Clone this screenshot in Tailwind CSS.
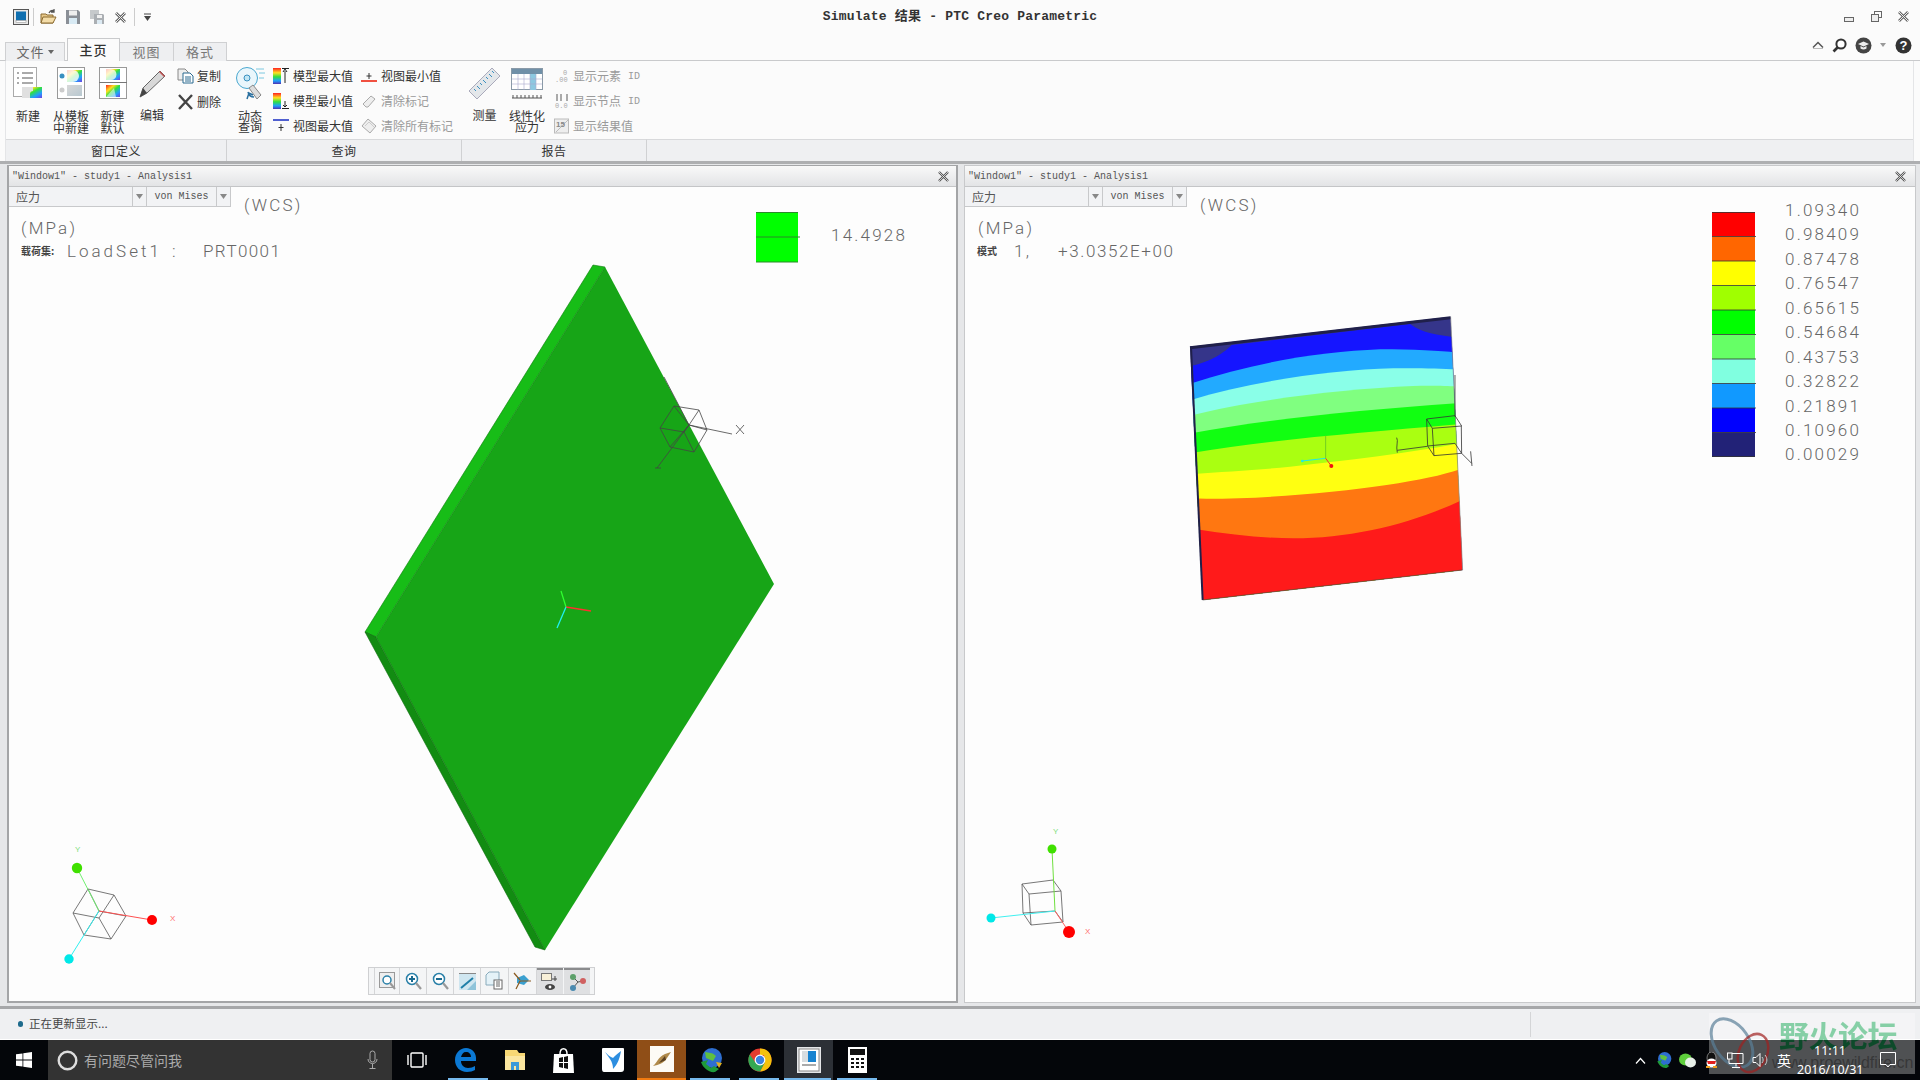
<!doctype html>
<html>
  <head>
    <meta charset="UTF-8" />
    <title>Simulate 结果 - PTC Creo Parametric</title>
    <script src="https://cdn.jsdelivr.net/npm/@tailwindcss/browser@4"></script>
  </head>
  <body class="w-[1920px] h-[1080px] overflow-hidden relative flex flex-col bg-[#fbfbfb] text-[#333] font-['Noto_Sans_CJK_SC',sans-serif] text-[12px]">
    <!-- shared gradients -->
    <svg class="absolute w-0 h-0">
      <defs>
        <linearGradient id="rb" x1="0" y1="0" x2="1" y2="1">
          <stop offset="0" stop-color="#ff2020" /><stop offset=".3" stop-color="#ffe020" /><stop offset=".5" stop-color="#30e040" /><stop offset=".75" stop-color="#20a0ff" /><stop offset="1" stop-color="#7040e0" />
        </linearGradient>
        <linearGradient id="rv" x1="0" y1="0" x2="0" y2="1">
          <stop offset="0" stop-color="#ff2020" /><stop offset=".3" stop-color="#ffe020" /><stop offset=".55" stop-color="#30e040" /><stop offset=".8" stop-color="#20a0ff" /><stop offset="1" stop-color="#5030b0" />
        </linearGradient>
        <linearGradient id="rg" x1="0" y1="0" x2="1" y2="1">
          <stop offset="0" stop-color="#d8d8d8" /><stop offset="1" stop-color="#b8c8d0" />
        </linearGradient>
      </defs>
    </svg>

    <!-- title bar -->
    <header class="h-[38px] shrink-0 grid grid-cols-[1fr_auto_1fr] items-start">
      <div class="flex items-center pl-[13px] pt-[8px] h-[26px]">
        <svg class="w-[16px] h-[16px]" viewBox="0 0 16 16"><rect x=".5" y=".5" width="15" height="15" fill="#e8e8e8" stroke="#555" /><rect x="3" y="2.500" width="10" height="9" fill="#0f6fb0" /><rect x="3" y="11.500" width="10" height="2" fill="#fff" stroke="#888" stroke-width=".5" /></svg>
        <span class="w-px h-[18px] bg-[#ccc] mx-[4px]"></span>
        <svg class="ml-[2px] w-[17px] h-[16px]" viewBox="0 0 17 16"><path d="M1 5h5l1 1h6v8H1z" fill="#e8c98a" stroke="#8a6a30" /><path d="M3 8h13l-3 6H1z" fill="#f3dca8" stroke="#8a6a30" /><path d="M9 4c1-2 3-3 5-2M14 0v3h-3" fill="none" stroke="#555" stroke-width="1.300" /></svg>
        <svg class="ml-[8px] w-[16px] h-[16px]" viewBox="0 0 16 16"><path d="M1 1h12l2 2v12H1z" fill="#8a8f96" /><rect x="4" y="1.500" width="8" height="5" fill="#eee" /><rect x="4" y="9" width="8" height="6" fill="#d8eaf4" /></svg>
        <svg class="ml-[8px] w-[16px] h-[16px] opacity-70" viewBox="0 0 16 16"><path d="M1 1h9v9H1z" fill="#b0b4b8" /><path d="M5 5h9l1 1v9H5z" fill="#8a8f96" /><rect x="8" y="6" width="5" height="3" fill="#eee" /><rect x="8" y="11" width="5" height="4" fill="#cfe4f0" /></svg>
        <svg class="ml-[10px] w-[11px] h-[11px]" viewBox="0 0 11 11"><path d="M1 1l9 9M10 1l-9 9" stroke="#666" stroke-width="2.800" /><path d="M1 1l9 9M10 1l-9 9" stroke="#eee" stroke-width="1" /></svg>
        <span class="w-px h-[18px] bg-[#ccc] ml-[8px] mr-[8px]"></span>
        <svg class="w-[9px] h-[9px]" viewBox="0 0 9 9"><path d="M1 1h7" stroke="#444" /><path d="M1 3h7L4.500 8z" fill="#444" /></svg>
      </div>
      <div class="pt-[8px] font-['Liberation_Mono','Noto_Sans_CJK_SC',monospace] font-bold text-[13px] leading-[18px] tracking-[.2px] text-[#333]">Simulate 结果 - PTC Creo Parametric</div>
      <div class="flex justify-end items-center pt-[10px] pr-[11px] gap-[16px]">
        <svg class="w-[10px] h-[5px] mt-[7px]" viewBox="0 0 10 5"><rect x=".5" y=".5" width="9" height="4" fill="#eee" stroke="#666" /></svg>
        <svg class="w-[11px] h-[11px] ml-[1px]" viewBox="0 0 11 11"><rect x="3.500" y=".5" width="7" height="6" fill="none" stroke="#666" /><rect x=".5" y="3.500" width="7" height="7" fill="#eee" stroke="#666" /></svg>
        <svg class="w-[11px] h-[11px]" viewBox="0 0 11 11"><path d="M1 1l9 9M10 1l-9 9" stroke="#666" stroke-width="2.600" /><path d="M1 1l9 9M10 1l-9 9" stroke="#eee" stroke-width="1" /></svg>
      </div>
    </header>

    <!-- tabs -->
    <nav class="h-[23px] shrink-0 flex items-end pl-[5px] border-b border-[#c9cacc] relative">
      <div class="w-[60px] h-[19px] -mb-px flex items-center justify-center gap-[3px] bg-[#eeeff1] border border-b-0 border-[#cfd0d2] text-[#666] text-[13px] tracking-[1px]">文件<svg class="w-[6px] h-[4px]" viewBox="0 0 6 4"><path d="M0 0h6L3 4z" fill="#666" /></svg></div>
      <div class="ml-[2px] w-[53px] h-[23px] -mb-px flex items-center justify-center bg-[#fbfbfb] border border-b-0 border-[#c9cacc] text-[13px] tracking-[1px] relative z-10 font-medium">主页</div>
      <div class="w-[54px] h-[19px] -mb-px flex items-center justify-center bg-[#eeeff1] border border-l-0 border-b-0 border-[#cfd0d2] text-[#777] text-[13px] tracking-[1px]">视图</div>
      <div class="w-[53px] h-[19px] -mb-px flex items-center justify-center bg-[#eeeff1] border border-l-0 border-b-0 border-[#cfd0d2] text-[#777] text-[13px] tracking-[1px]">格式</div>
      <div class="ml-auto mr-[8px] flex items-center gap-[8px] h-[20px] mb-[5px]">
        <svg class="w-[12px] h-[8px]" viewBox="0 0 12 8"><path d="M1 6.500l5-5 5 5" fill="none" stroke="#555" stroke-width="1.500" /><path d="M1 7.500h10" stroke="#bbb" /></svg>
        <svg class="w-[15px] h-[15px]" viewBox="0 0 15 15"><circle cx="9" cy="6" r="4.600" fill="#fff" stroke="#333" stroke-width="2" /><path d="M5.500 9.500L1.500 13.500" stroke="#333" stroke-width="2.600" /></svg>
        <svg class="w-[17px] h-[17px]" viewBox="0 0 17 17"><circle cx="8.500" cy="8.500" r="8" fill="#444" /><path d="M3 7l5.500-2.500L14 7l-5.500 2.500z" fill="#eee" /><path d="M5.500 9v2.500c2 1.200 4 1.200 6 0V9l-3 1.400z" fill="#eee" /></svg>
        <svg class="w-[6px] h-[4px]" viewBox="0 0 6 4"><path d="M0 0h6L3 4z" fill="#999" /></svg>
        <svg class="w-[17px] h-[17px] ml-[1px]" viewBox="0 0 17 17"><circle cx="8.500" cy="8.500" r="8" fill="#333" /><text x="8.500" y="13" text-anchor="middle" fill="#fff" class="text-[13px] font-bold font-['Liberation_Sans']">?</text></svg>
      </div>
    </nav>

    <!-- ribbon -->
    <section class="h-[100px] shrink-0 flex pl-[5px] pr-[6px] bg-[#fbfbfb]">
      <div class="w-[222px] flex flex-col border-l border-[#e4e5e7]">
        <div class="h-[78px] flex">
          <div class="w-[44px] flex flex-col items-center pt-[6px]">
            <svg class="w-[30px] h-[32px]" viewBox="0 0 30 32"><rect x=".5" y=".5" width="23" height="29" fill="#fff" stroke="#aaa" /><path d="M4 6h2M9 6h11M4 11h2M9 11h11M4 16h2M9 16h11" stroke="#555" /><rect x="9" y="20" width="20" height="11" fill="url(#rb)" /><path d="M9 31h8v-4c0-2 1-3 3-3v-4H9z" fill="#e0e0e0" /></svg>
            <span class="mt-[11px] leading-[12px]">新建</span>
          </div>
          <div class="w-[42px] flex flex-col items-center pt-[6px]">
            <svg class="w-[28px] h-[32px]" viewBox="0 0 28 32"><rect x=".5" y=".5" width="27" height="31" fill="#fff" stroke="#999" /><rect x="10" y="3" width="15" height="12" fill="url(#rb)" /><path d="M10 3h6a5 5 0 0 1 0 12h-6z" fill="#fff" opacity=".8" /><circle cx="5" cy="9" r="2.500" fill="#3a90c0" /><rect x="10" y="18" width="15" height="11" fill="url(#rg)" /><circle cx="5" cy="23" r="2.500" fill="#ccc" /></svg>
            <span class="mt-[11px] leading-[12px] text-center">从模板<br />中新建</span>
          </div>
          <div class="w-[41px] flex flex-col items-center pt-[6px]">
            <svg class="w-[28px] h-[32px]" viewBox="0 0 28 32"><rect x=".5" y=".5" width="27" height="31" fill="#fff" stroke="#999" /><path d="M0 15.500h28" stroke="#777" /><rect x="7" y="2" width="14" height="11" fill="url(#rb)" /><path d="M7 2h5a4 4 0 0 1 0 11H7z" fill="#fff" opacity=".75" /><rect x="7" y="18" width="14" height="12" fill="url(#rb)" /><path d="M7 30l8-9 2 9z" fill="#fff" opacity=".55" /></svg>
            <span class="mt-[11px] leading-[12px] text-center">新建<br />默认</span>
          </div>
          <div class="w-[38px] flex flex-col items-center pt-[9px]">
            <svg class="w-[27px] h-[28px]" viewBox="0 0 27 28"><path d="M1 27l3-9L21 1l5 5L8 23z" fill="#d8d8d8" stroke="#666" /><path d="M1 27l3-9 4 5z" fill="#444" /><path d="M20 2l5 5 1-1-5-5z" fill="#c05050" /></svg>
            <span class="mt-[11px] leading-[12px]">编辑</span>
          </div>
          <div class="flex-1 flex flex-col pl-[6px] pt-[7px] gap-[10px]">
            <div class="flex items-center gap-[3px] h-[16px]"><svg class="w-[17px] h-[16px]" viewBox="0 0 17 16"><path d="M1 1h7l3 3v8H1z" fill="#eee" stroke="#888" /><path d="M6 5h7l3 3v7H6z" fill="#fff" stroke="#2a6a90" /><path d="M8 9h6M8 11h6M8 13h6" stroke="#2a6a90" /></svg>复制</div>
            <div class="flex items-center gap-[3px] h-[16px]"><svg class="w-[17px] h-[16px]" viewBox="0 0 17 16"><path d="M2 1l13 14M15 1L2 15" stroke="#444" stroke-width="2.400" /></svg>删除</div>
          </div>
        </div>
        <div class="h-[22px] flex items-center justify-center bg-[#eff0f2] border-t border-[#d8d9db] border-r border-r-[#d0d1d3] tracking-[.5px]">窗口定义</div>
      </div>

      <div class="w-[235px] flex flex-col">
        <div class="h-[78px] flex">
          <div class="w-[46px] flex flex-col items-center pt-[6px]">
            <svg class="w-[32px] h-[33px]" viewBox="0 0 32 33"><circle cx="13" cy="11" r="10.500" fill="#eaf6fb" stroke="#4aa8d0" /><circle cx="13" cy="11" r="3" fill="#bfe6f4" stroke="#3a90c0" /><path d="M22 2h8M25 6h6M25 11h5" stroke="#7cc8e0" /><path d="M19 18l8 10-4 4-8-11z" fill="#ddd" stroke="#888" /><path d="M14 25c1 4 4 5 6 5M13 32l2-6 4 2" fill="none" stroke="#2a70a0" stroke-width="1.500" /></svg>
            <span class="mt-[10px] leading-[11px] text-center">动态<br />查询</span>
          </div>
          <div class="flex flex-col pt-[7px] gap-[9px] w-[88px]">
            <div class="flex items-center gap-[4px] h-[16px]"><svg class="w-[16px] h-[16px]" viewBox="0 0 16 16"><rect width="8" height="16" fill="url(#rv)" /><path d="M12 15V3M10 4l2-3 2 3" stroke="#222" fill="none" /><path d="M9 .5h7" stroke="#222" /></svg>模型最大值</div>
            <div class="flex items-center gap-[4px] h-[16px]"><svg class="w-[16px] h-[16px]" viewBox="0 0 16 16"><rect width="8" height="16" fill="url(#rv)" /><path d="M12 8v6M10 12l2 2 2-2" stroke="#222" fill="none" /><path d="M9 15.500h7" stroke="#222" /></svg>模型最小值</div>
            <div class="flex items-center gap-[4px] h-[16px]"><svg class="w-[16px] h-[16px]" viewBox="0 0 16 16"><path d="M0 2h16" stroke="#5060d0" stroke-width="2" /><path d="M8 6v7M5.500 9.500h5" stroke="#333" /></svg>视图最大值</div>
          </div>
          <div class="flex flex-col pt-[7px] gap-[9px]">
            <div class="flex items-center gap-[4px] h-[16px]"><svg class="w-[16px] h-[16px]" viewBox="0 0 16 16"><path d="M0 13h16" stroke="#f05040" stroke-width="2" /><path d="M8 5v6M5.500 8h5" stroke="#333" /></svg>视图最小值</div>
            <div class="flex items-center gap-[4px] h-[16px] text-[#9a9a9a]"><svg class="w-[16px] h-[16px]" viewBox="0 0 16 16"><path d="M2 11l8-8 4 3-7 8H5z" fill="#eee" stroke="#aaa" /></svg>清除标记</div>
            <div class="flex items-center gap-[4px] h-[16px] text-[#9a9a9a]"><svg class="w-[16px] h-[16px]" viewBox="0 0 16 16"><path d="M1 8l6-7 8 7-6 7z" fill="#eee" stroke="#aaa" /><path d="M4 8l4-4 5 5" fill="none" stroke="#ccc" /></svg>清除所有标记</div>
          </div>
        </div>
        <div class="h-[22px] flex items-center justify-center bg-[#eff0f2] border-t border-[#d8d9db] border-r border-r-[#d0d1d3] tracking-[.5px]">查询</div>
      </div>

      <div class="w-[185px] flex flex-col">
        <div class="h-[78px] flex">
          <div class="w-[45px] flex flex-col items-center pt-[6px]">
            <svg class="w-[33px] h-[33px]" viewBox="0 0 33 33"><path d="M1 24L24 1l8 8L9 32z" fill="#e4e7ea" stroke="#aab" /><path d="M6 22l2 2M9 19l3 3M12 16l2 2M15 13l3 3M18 10l2 2M21 7l3 3M24 4l2 2" stroke="#3a90c0" /></svg>
            <span class="mt-[9px] leading-[12px]">测量</span>
          </div>
          <div class="w-[40px] flex flex-col items-center pt-[7px]">
            <svg class="w-[32px] h-[32px]" viewBox="0 0 32 32"><rect x=".5" y=".5" width="31" height="21" fill="#fff" stroke="#8a9aa8" /><rect x="1" y="1" width="30" height="5" fill="#7090a8" /><rect x="19" y="6" width="6" height="16" fill="#8cc8e0" /><path d="M1 11h30M1 16h30M7 6v16M13 6v16M19 6v16M25 6v16" stroke="#aac" stroke-width=".6" /><path d="M1 30h30M2 30v-3M6 30v-3M10 30v-3M14 30v-3M18 30v-3M22 30v-3M26 30v-3M30 30v-3" stroke="#555" /></svg>
            <span class="mt-[10px] leading-[11px] text-center">线性化<br />应力</span>
          </div>
          <div class="flex flex-col pl-[7px] pt-[7px] gap-[9px] text-[#9a9a9a]">
            <div class="flex items-center h-[16px]"><svg class="w-[16px] h-[16px] mr-[3px]" viewBox="0 0 16 16"><text x="1" y="14" class="text-[7px] font-['Liberation_Mono']" fill="#aaa">.00</text><text x="9" y="7" class="text-[7px] font-['Liberation_Mono']" fill="#aaa">0</text></svg><span class="w-[55px]">显示元素</span><span class="font-['Liberation_Mono'] text-[10px]">ID</span></div>
            <div class="flex items-center h-[16px]"><svg class="w-[16px] h-[16px] mr-[3px]" viewBox="0 0 16 16"><text x="1" y="15" class="text-[7px] font-['Liberation_Mono']" fill="#aaa">0.0</text><path d="M3 1v7M7 1v7M13 1v7" stroke="#aaa" stroke-width="2" /></svg><span class="w-[55px]">显示节点</span><span class="font-['Liberation_Mono'] text-[10px]">ID</span></div>
            <div class="flex items-center h-[16px]"><svg class="w-[16px] h-[16px] mr-[3px]" viewBox="0 0 16 16"><rect x=".5" y="1" width="14" height="14" fill="#eee" stroke="#bbb" /><path d="M2 14L14 2" stroke="#bbb" /><text x="2" y="9" class="text-[8px] font-bold font-['Liberation_Sans']" fill="#888">15</text></svg>显示结果值</div>
          </div>
        </div>
        <div class="h-[22px] flex items-center justify-center bg-[#eff0f2] border-t border-[#d8d9db] border-r border-r-[#d0d1d3] tracking-[.5px]">报告</div>
      </div>
      <div class="flex-1 flex flex-col border-r border-[#e4e5e7]">
        <div class="h-[78px]"></div>
        <div class="h-[22px] bg-[#eff0f2] border-t border-[#d8d9db]"></div>
      </div>
    </section>

    <!-- viewports -->
    <main class="h-[845px] shrink-0 flex pl-[7px] pr-[4px] pt-[1px] pb-[3px] gap-[6px] bg-[#e6e7e9] border-t-[3px] border-[#aeafb1]">
      <div class="w-[951px] flex flex-col relative bg-[#fdfdfd] border-2 border-t-[1px] border-[#a4a5a7]">
        <div class="h-[21px] shrink-0 flex items-center justify-between pl-[3px] pr-[7px] bg-gradient-to-b from-[#f9f9f9] to-[#e3e4e6] border-b border-[#c4c5c7] font-['Liberation_Mono',monospace] text-[10px] text-[#555]">
          <span>"Window1" - study1 - Analysis1</span>
          <svg class="w-[11px] h-[11px]" viewBox="0 0 11 11"><path d="M1 1l9 9M10 1l-9 9" stroke="#555" stroke-width="2.400" /><path d="M1 1l9 9M10 1l-9 9" stroke="#eee" stroke-width=".8" /></svg>
        </div>
        <div class="relative flex-1">
          <svg class="absolute top-0 left-0 w-[947px] h-[813px]" viewBox="9 187 947 813">
            <polygon points="605,267 774,584 545,950 376,637" fill="#17a517" />
            <polygon points="593,265 605,267 376,637 365,632" fill="#17bd17" stroke="#0c7a0c" stroke-width=".6" />
            <polygon points="365,632 376,637 545,950 535,947" fill="#128c12" stroke="#0c6a0c" stroke-width=".6" />
            <!-- part csys -->
            <g fill="none" stroke="#444" stroke-width=".8">
              <path d="M674 406l25 4 8 20-13 22-24-5-10-19z" />
              <path d="M660 428l24 4 10 20M684 432l5-7 10-15M674 406l15 19 18 5M670 447l19-22" />
              <path d="M664 377l25 48 43 9M689 425l-32 43M736 425l8 9M744 425l-8 9M655 468h6" />
            </g>
            <g fill="none" stroke-width="1.300">
              <path d="M566 607l-5-16" stroke="#30ff30" />
              <path d="M566 607l25 4" stroke="#ff3030" />
              <path d="M566 607l-9 21" stroke="#20f0f0" />
            </g>
            <!-- view triad -->
            <g fill="none" stroke="#555" stroke-width=".8">
              <path d="M88 889l26 6 12 21-15 23-27-4-11-22zM73 913l26 5 12 21M99 918l15-23M88 889l11 22 27 5M84 935l15-24" />
            </g>
            <path d="M99 911L77 868" stroke="#70f070" stroke-width="1" />
            <path d="M99 911l53 9" stroke="#ff5050" stroke-width="1" />
            <path d="M99 911L69 959" stroke="#30f0f0" stroke-width="1" />
            <circle cx="77" cy="868" r="5.200" fill="#40e000" />
            <circle cx="152" cy="920" r="5" fill="#ff0000" />
            <circle cx="69" cy="959" r="4.700" fill="#00e8e8" />
            <g class="font-['Liberation_Sans'] text-[8px]">
              <text x="75" y="852" fill="#80e080">Y</text>
              <text x="170" y="921" fill="#ff7070">X</text>
            </g>
            <!-- legend -->
            <rect x="756" y="212" width="42" height="25" fill="#00ff00" />
            <rect x="756" y="237" width="42" height="25" fill="#00ff00" />
            <path d="M756 212.500h42M756 237h44M756 262h42" stroke="#2a8a2a" />
            <g class="font-['Roboto'] font-light text-[17px] tracking-[2.200px]" fill="#666">
              <text x="831" y="241">14.4928</text>
              <text x="244" y="211">(WCS)</text>
              <text x="21" y="234">(MPa)</text>
              <text x="67" y="257" class="tracking-[3px]">LoadSet1</text>
              <text x="172" y="257">:</text>
              <text x="203" y="257" class="tracking-[1.400px]">PRT0001</text>
            </g>
            <text x="21" y="255" fill="#444" class="text-[10px] font-bold font-['Noto_Sans_CJK_SC']">载荷集:</text>
          </svg>
          <div class="relative flex h-[20px] bg-[#f2f3f5] w-[222px] border-b border-r border-[#c8c9cb] text-[#555]">
            <div class="w-[123px] flex items-center pl-[7px] text-[12px]">应力</div>
            <div class="w-[15px] flex items-center justify-center border-x border-[#c8c9cb]"><svg class="w-[7px] h-[5px]" viewBox="0 0 7 5"><path d="M0 0h7L3.500 5z" fill="#888" /></svg></div>
            <div class="w-[69px] flex items-center justify-center font-['Liberation_Mono',monospace] text-[10px]">von Mises</div>
            <div class="flex-1 flex items-center justify-center border-l border-[#c8c9cb]"><svg class="w-[7px] h-[5px]" viewBox="0 0 7 5"><path d="M0 0h7L3.500 5z" fill="#888" /></svg></div>
          </div>
          <!-- view toolbar -->
          <div class="absolute left-[359px] top-[780px] h-[28px] flex bg-[#f4f5f6] border border-[#cfd0d2] pl-[5px] pr-[4px]">
            <div class="w-[26px] flex items-center justify-center border-x border-[#d4d5d7]"><svg class="w-[17px] h-[18px]" viewBox="0 0 17 18"><rect x=".5" y=".5" width="15" height="15" fill="#eee" stroke="#999" /><circle cx="8" cy="8" r="4" fill="#fff" stroke="#2a80a8" stroke-width="1.500" /><path d="M11 11l5 6" stroke="#999" stroke-width="2" /></svg></div>
            <div class="w-[27px] flex items-center justify-center border-r border-[#d4d5d7]"><svg class="w-[17px] h-[18px]" viewBox="0 0 17 18"><circle cx="7" cy="7" r="5.500" fill="#fff" stroke="#2a80a8" stroke-width="1.500" /><path d="M4 7h6M7 4v6" stroke="#1a6a90" stroke-width="2" /><path d="M11 11l5 6" stroke="#999" stroke-width="2.200" /></svg></div>
            <div class="w-[27px] flex items-center justify-center border-r border-[#d4d5d7]"><svg class="w-[17px] h-[18px]" viewBox="0 0 17 18"><circle cx="7" cy="7" r="5.500" fill="#fff" stroke="#2a80a8" stroke-width="1.500" /><path d="M4 7h6" stroke="#1a6a90" stroke-width="2" /><path d="M11 11l5 6" stroke="#999" stroke-width="2.200" /></svg></div>
            <div class="w-[27px] flex items-center justify-center border-r border-[#d4d5d7]"><svg class="w-[17px] h-[17px]" viewBox="0 0 17 17"><rect width="17" height="17" fill="#cfe6f0" /><path d="M0 .5h17" stroke="#888" /><path d="M2 15L14 5" stroke="#1f7fa8" stroke-width="2" /><path d="M8 17L17 8v9z" fill="#8fc4da" /></svg></div>
            <div class="w-[28px] flex items-center justify-center border-r border-[#d4d5d7]"><svg class="w-[20px] h-[20px]" viewBox="0 0 20 20"><path d="M1 4l3-3h10v13H1z" fill="#e4f2f8" stroke="#8ab" /><rect x="9" y="9" width="8" height="9" fill="#fff" stroke="#666" /><path d="M11 11h4M11 13h4M11 15h4" stroke="#666" /></svg></div>
            <div class="w-[28px] flex items-center justify-center border-r border-[#d4d5d7]"><svg class="w-[19px] h-[18px]" viewBox="0 0 19 18"><path d="M4 6l7-3 5 5-5 5-7-2z" fill="#3aa0d0" /><path d="M1 1l6 7M3 17l4-8M18 9H7" stroke="#8a5a20" stroke-width="1.200" /></svg></div>
            <div class="w-[26px] flex items-center justify-center bg-[#dfe0e2] border-t-2 border-[#8a8b8d]"><svg class="w-[18px] h-[19px]" viewBox="0 0 18 19"><rect x=".5" y=".5" width="10" height="7" fill="#f8f0d8" stroke="#777" /><path d="M14 3v5M11 6h5" stroke="#444" /><ellipse cx="9" cy="14" rx="5" ry="3" fill="#444" /><circle cx="9" cy="14" r="1.400" fill="#fff" /></svg></div>
            <div class="w-[26px] ml-[1px] flex items-center justify-center bg-[#dfe0e2] border-t-2 border-[#8a8b8d]"><svg class="w-[18px] h-[18px]" viewBox="0 0 18 18"><path d="M5 4l5 5 5-1M10 9l-5 6" fill="none" stroke="#555" /><circle cx="5" cy="4" r="3" fill="#5ca06a" /><circle cx="15" cy="8" r="3" fill="#d06060" /><circle cx="5" cy="15" r="3" fill="#4a8ab0" /></svg></div>
          </div>
        </div>
      </div>

      <div class="w-[952px] flex flex-col relative bg-[#fdfdfd] border border-[#c8c9cb]">
        <div class="h-[21px] shrink-0 flex items-center justify-between pl-[3px] pr-[9px] bg-gradient-to-b from-[#f9f9f9] to-[#e3e4e6] border-b border-[#c4c5c7] font-['Liberation_Mono',monospace] text-[10px] text-[#555]">
          <span>"Window1" - study1 - Analysis1</span>
          <svg class="w-[11px] h-[11px]" viewBox="0 0 11 11"><path d="M1 1l9 9M10 1l-9 9" stroke="#555" stroke-width="2.400" /><path d="M1 1l9 9M10 1l-9 9" stroke="#eee" stroke-width=".8" /></svg>
        </div>
        <div class="relative flex-1">
          <svg class="absolute top-0 left-0 w-[950px] h-[815px]" viewBox="965 187 950 815">
            <defs><clipPath id="plate"><polygon points="30,110 812,20 848,780 68,870" /></clipPath></defs>
            <g transform="translate(1180 310) scale(.3333)">
              <g clip-path="url(#plate)">
                <rect width="900" height="900" fill="#35358a" />
                <path d="M0 175C90 160 130 130 155 105L690 42C730 70 770 75 830 82V900H0z" fill="#1515ff" />
                <path d="M0 232C200 160 420 125 600 118C700 118 780 122 830 128V900H0z" fill="#22aaff" />
                <path d="M0 280C200 215 450 180 640 175C720 174 780 176 830 178V900H0z" fill="#8affe8" />
                <path d="M0 325C200 270 480 238 700 228C760 227 800 228 830 230V900H0z" fill="#80ff80" />
                <path d="M0 376C240 330 520 302 830 280V900H0z" fill="#11ff11" />
                <path d="M0 435C260 390 520 370 835 343V900H0z" fill="#aaff11" />
                <path d="M0 495C120 485 220 482 330 470C500 452 680 430 840 400V900H0z" fill="#ffff11" />
                <path d="M0 565C200 572 450 550 620 525C720 510 790 495 845 476V900H0z" fill="#ff7711" />
                <path d="M0 650C110 668 230 685 340 685C520 685 700 640 850 568V900H0z" fill="#ff1a1a" />
              </g>
              <path d="M30 113L812 23" stroke="#20204a" stroke-width="9" />
              <path d="M33 110L68 870" stroke="#20204a" stroke-width="6" />
              <path d="M68 870L848 780" stroke="#444" stroke-width="2" />
              <path d="M812 20L848 780" stroke="#888" stroke-width="2" />
              <g fill="none" stroke="#333" stroke-width="2.400">
                <path d="M740 327l85-10 20 31-88 7zM740 327l3 81 19 29 83-7-1-82M757 355l5 82M743 408l82-8 20 30" />
                <path d="M652 421l90-12M650 383c6 10-3 25 2 45M825 195v125M845 430l30 30M872 424l4 44" />
              </g>
              <path d="M437 445V377" stroke="#70d020" stroke-width="3" />
              <path d="M437 445L367 453" stroke="#20e8e8" stroke-width="3" />
              <path d="M437 445L454 468" stroke="#f03030" stroke-width="3" />
              <circle cx="367" cy="453" r="4" fill="#20e8e8" />
              <circle cx="454" cy="468" r="6" fill="#f01010" />
            </g>
            <!-- view triad -->
            <g fill="none" stroke="#555" stroke-width=".8">
              <path d="M1022 884l31-4 8 11-32 3zM1022 884l1 29 8 12 32-3-2-31M1029 894l2 31M1023 913l32-2 8 11" />
            </g>
            <path d="M1052 849l3 62" stroke="#70e040" stroke-width="1" />
            <path d="M1055 911l14 21" stroke="#ff6060" stroke-width="1" />
            <path d="M1055 911l-64 7" stroke="#40f0f0" stroke-width="1" />
            <circle cx="1052" cy="849" r="4.500" fill="#40e000" />
            <circle cx="1069" cy="932" r="6" fill="#ff0000" />
            <circle cx="991" cy="918" r="4.500" fill="#00e8e8" />
            <g class="font-['Liberation_Sans'] text-[8px]">
              <text x="1053" y="834" fill="#80e080">Y</text>
              <text x="1085" y="934" fill="#ff7070">X</text>
            </g>
            <!-- legend -->
            <rect x="1712" y="212" width="43" height="24.500" fill="#ff0000" />
            <rect x="1712" y="236.500" width="43" height="24.500" fill="#ff6600" />
            <rect x="1712" y="261" width="43" height="24.500" fill="#ffff00" />
            <rect x="1712" y="285.500" width="43" height="24.500" fill="#a0ff00" />
            <rect x="1712" y="310" width="43" height="24.500" fill="#00ff00" />
            <rect x="1712" y="334.500" width="43" height="24.500" fill="#66ff66" />
            <rect x="1712" y="359" width="43" height="24.500" fill="#80ffe0" />
            <rect x="1712" y="383.500" width="43" height="24.500" fill="#1199ff" />
            <rect x="1712" y="408" width="43" height="24.500" fill="#0000ff" />
            <rect x="1712" y="432.500" width="43" height="24.500" fill="#222277" />
            <path d="M1712 212.500h43M1712 236.500h44M1712 261h44M1712 285.500h44M1712 310h44M1712 334.500h44M1712 359h44M1712 383.500h44M1712 408h44M1712 432.500h44M1712 456.500h43" stroke="#333" stroke-width=".8" />
            <g class="font-['Roboto'] font-light text-[17px] tracking-[2.200px]" fill="#666">
              <text x="1785" y="216">1.09340</text>
              <text x="1785" y="240">0.98409</text>
              <text x="1785" y="265">0.87478</text>
              <text x="1785" y="289">0.76547</text>
              <text x="1785" y="314">0.65615</text>
              <text x="1785" y="338">0.54684</text>
              <text x="1785" y="363">0.43753</text>
              <text x="1785" y="387">0.32822</text>
              <text x="1785" y="412">0.21891</text>
              <text x="1785" y="436">0.10960</text>
              <text x="1785" y="460">0.00029</text>
              <text x="1200" y="211">(WCS)</text>
              <text x="978" y="234">(MPa)</text>
              <text x="1014" y="257">1,</text>
              <text x="1058" y="257" class="tracking-[1.600px]">+3.0352E+00</text>
            </g>
            <text x="977" y="255" fill="#444" class="text-[10px] font-bold font-['Noto_Sans_CJK_SC']">模式</text>
          </svg>
          <div class="relative flex h-[20px] bg-[#f2f3f5] w-[222px] border-b border-r border-[#c8c9cb] text-[#555]">
            <div class="w-[123px] flex items-center pl-[7px] text-[12px]">应力</div>
            <div class="w-[15px] flex items-center justify-center border-x border-[#c8c9cb]"><svg class="w-[7px] h-[5px]" viewBox="0 0 7 5"><path d="M0 0h7L3.500 5z" fill="#888" /></svg></div>
            <div class="w-[69px] flex items-center justify-center font-['Liberation_Mono',monospace] text-[10px]">von Mises</div>
            <div class="flex-1 flex items-center justify-center border-l border-[#c8c9cb]"><svg class="w-[7px] h-[5px]" viewBox="0 0 7 5"><path d="M0 0h7L3.500 5z" fill="#888" /></svg></div>
          </div>
        </div>
      </div>
    </main>

    <!-- status bar -->
    <div class="h-[34px] shrink-0 flex items-center pl-[18px] bg-[#eff0f2] border-t-[3px] border-[#a6a7a9] border-b border-b-white">
      <span class="w-[5px] h-[6px] rounded-full bg-[#1d6a8c]"></span>
      <span class="ml-[6px] text-[11.500px] text-[#444]">正在更新显示...</span>
      <span class="ml-auto mr-[389px] w-px h-[25px] bg-[#d4d5d7]"></span>
    </div>

    <!-- taskbar -->
    <footer class="h-[40px] shrink-0 flex items-stretch bg-[#04060a] text-white">
      <div class="w-[48px] flex items-center justify-center"><svg class="w-[16px] h-[16px]" viewBox="0 0 16 16"><path d="M0 2.300l6.500-.9v6.200H0zM7.300 1.300L16 0v7.600H7.300zM0 8.400h6.500v6.200L0 13.700zM7.300 8.400H16V16l-8.700-1.300z" fill="#fff" /></svg></div>
      <div class="w-[344px] flex items-center bg-[#333] pl-[9px]">
        <svg class="w-[21px] h-[21px]" viewBox="0 0 21 21"><circle cx="10.500" cy="10.500" r="8.800" fill="none" stroke="#ddd" stroke-width="2.400" /></svg>
        <span class="ml-[6px] text-[#aaa] text-[14px]">有问题尽管问我</span>
        <svg class="ml-auto mr-[13px] w-[13px] h-[20px]" viewBox="0 0 13 20"><rect x="4" y="1" width="5" height="11" rx="2.500" fill="none" stroke="#aaa" /><path d="M2 9c0 6 9 6 9 0M6.500 14v4M3.500 18.500h6" fill="none" stroke="#aaa" /></svg>
      </div>
      <div class="w-[49px] flex items-center justify-center"><svg class="w-[20px] h-[20px]" viewBox="0 0 20 20"><rect x="4" y="3" width="12" height="14" rx="1" fill="none" stroke="#fff" stroke-width="1.400" /><path d="M1 5v10M19 5v10" stroke="#fff" stroke-width="1.400" /></svg></div>
      <div class="w-[49px] flex items-center justify-center relative"><svg class="w-[22px] h-[24px]" viewBox="0 0 22 24"><path d="M21 13H6c0 4 3 7 7 7 3 0 5-1 7-2v4c-2 1-5 2-8 2C5 24 0 19 0 12 0 5 5 0 11 0s11 5 10 13zM16 9c0-3-2-5-5-5-3 0-4 2-5 5z" fill="#0b78d4" /></svg><span class="absolute bottom-0 left-[7px] w-[40px] h-[2px] bg-[#76b9ed]"></span></div>
      <div class="w-[49px] flex items-center justify-center"><svg class="w-[22px] h-[24px]" viewBox="0 0 22 24"><path d="M1 2h12l2 3h6v17H1z" fill="#f7d774" /><rect x="1" y="8" width="20" height="14" fill="#fbe6a0" /><rect x="7" y="14" width="8" height="8" fill="#3a9ad9" /><rect x="10" y="18" width="2" height="4" fill="#fbe6a0" /></svg></div>
      <div class="w-[49px] flex items-center justify-center"><svg class="w-[21px] h-[26px]" viewBox="0 0 21 26"><path d="M7 7c0-7 7-7 7 0" fill="none" stroke="#fff" stroke-width="1.500" /><path d="M1 7h19l1 19H0z" fill="#fff" /><path d="M6 11l4-1v5H6zM11 10l4-1v6h-4zM6 16h4v5l-4-1zM11 16h4v6l-4-1z" fill="#111" /></svg></div>
      <div class="w-[49px] flex items-center justify-center"><svg class="w-[24px] h-[26px]" viewBox="0 0 24 26"><path d="M2 1h20q1 0 1 1v20q0 3-3 3H3q-2 0-2-3V2q0-1 1-1z" fill="#fff" /><path d="M4 5c4 4 6 5 8 6 2-2 5-5 8-7-1 6-3 13-8 18 0-4-1-7-3-10z" fill="#2d8ee0" /></svg></div>
      <div class="w-[49px] flex items-center justify-center bg-[#8f4e17] border-b-2 border-[#f07a10]"><svg class="w-[24px] h-[26px]" viewBox="0 0 24 26"><rect width="24" height="26" fill="#fdfbf5" /><path d="M3 20c4-3 5-9 12-12l6-2-4 6c-3 5-8 7-14 8z" fill="#b08a4a" /><path d="M9 17l6-7 1 4z" fill="#5a4020" /></svg></div>
      <div class="w-[49px] flex items-center justify-center relative"><svg class="w-[24px] h-[26px]" viewBox="0 0 24 26"><circle cx="13" cy="11" r="10" fill="#2e6ed0" /><path d="M6 5c4 1 7 0 11 4l-3 5-7-3z" fill="#60c040" /><path d="M2 15c2 6 8 11 14 10l4-3-5-3-3 2-5-4 2-4z" fill="#1f9a3a" /><path d="M17 15l6 1-3 5z" fill="#e0b020" /></svg><span class="absolute bottom-0 left-[4px] w-[40px] h-[2px] bg-[#76b9ed]"></span></div>
      <div class="w-[49px] flex items-center justify-center relative"><svg class="w-[24px] h-[26px]" viewBox="0 0 24 24"><circle cx="12" cy="12" r="11.500" fill="#e33b2e" /><path d="M12 .5A11.500 11.500 0 0 1 22.500 7H12z" fill="#f4c20d" /><path d="M22.500 7A11.500 11.500 0 0 1 12 23.500L17 14l-1-7z" fill="#f4c20d" /><path d="M1.700 6.500A11.500 11.500 0 0 0 12 23.500L17 14H7z" fill="#34a853" /><circle cx="12" cy="12" r="5.400" fill="#fff" /><circle cx="12" cy="12" r="4.200" fill="#3b82e0" /></svg><span class="absolute bottom-0 left-[4px] w-[40px] h-[2px] bg-[#76b9ed]"></span></div>
      <div class="w-[49px] flex items-center justify-center relative bg-[#2c3036]"><svg class="w-[24px] h-[26px]" viewBox="0 0 24 26"><rect width="24" height="26" fill="#e4e6e8" /><rect x="2" y="2" width="20" height="22" fill="#fff" stroke="#888" /><rect x="11" y="4" width="8" height="11" fill="#1783d0" /><rect x="5" y="4" width="6" height="11" fill="#d8dde0" /><rect x="5" y="17" width="14" height="2" fill="#aaa" /></svg><span class="absolute bottom-0 left-0 w-[47px] h-[2px] bg-[#76b9ed]"></span></div>
      <div class="w-[49px] flex items-center justify-center relative"><svg class="w-[19px] h-[26px]" viewBox="0 0 19 26"><rect width="19" height="26" fill="#fff" /><rect x="2" y="2" width="15" height="6" fill="#111" /><path d="M3 11h3v2H3zM8 11h3v2H8zM13 11h3v2h-3zM3 15h3v2H3zM8 15h3v2H8zM13 15h3v2h-3zM3 19h3v2H3zM8 19h3v2H8zM13 19h3v2h-3z" fill="#111" /></svg><span class="absolute bottom-0 left-[4px] w-[40px] h-[2px] bg-[#76b9ed]"></span></div>
      <div class="ml-auto relative z-20 flex items-center pr-[7px]">
        <div class="w-[24px] flex justify-center"><svg class="w-[11px] h-[7px]" viewBox="0 0 11 7"><path d="M1 6.500l4.500-5 4.500 5" fill="none" stroke="#fff" stroke-width="1.200" /></svg></div>
        <div class="w-[24px] flex justify-center"><svg class="w-[16px] h-[18px]" viewBox="0 0 24 26"><circle cx="13" cy="11" r="10" fill="#2e6ed0" /><path d="M6 5c4 1 7 0 11 4l-3 5-7-3z" fill="#60c040" /><path d="M2 15c2 6 8 11 14 10l4-3-5-3-3 2-5-4 2-4z" fill="#1f9a3a" /></svg></div>
        <div class="w-[23px] flex justify-center"><svg class="w-[17px] h-[15px]" viewBox="0 0 17 15"><ellipse cx="6.500" cy="6.500" rx="6.500" ry="6" fill="#5fce3c" /><ellipse cx="11.500" cy="9.500" rx="5.500" ry="5" fill="#e8f0e8" /></svg></div>
        <div class="w-[24px] flex justify-center"><svg class="w-[13px] h-[17px]" viewBox="0 0 13 17"><ellipse cx="6.500" cy="6" rx="4.500" ry="6" fill="#111" stroke="#ddd" stroke-width=".5" /><ellipse cx="6.500" cy="11" rx="5" ry="4.500" fill="#fff" /><path d="M2 9h9l-1 3H3z" fill="#e02020" /><path d="M1 15h4M8 15h4" stroke="#f0a020" stroke-width="2" /></svg></div>
        <div class="w-[25px] flex justify-center"><svg class="w-[17px] h-[17px]" viewBox="0 0 17 17"><path d="M5 1.500h11v10H2V7" fill="none" stroke="#fff" /><rect x=".5" y="1" width="4.500" height="6" fill="none" stroke="#fff" /><path d="M9 11.500v3M5 15.500h8" stroke="#fff" /></svg></div>
        <div class="w-[23px] flex justify-center"><svg class="w-[16px] h-[16px]" viewBox="0 0 16 16"><path d="M1 5.500h3l4-4v13l-4-4H1z" fill="none" stroke="#fff" /><path d="M10 5c1.500 2 1.500 4 0 6M13 3c2.500 3 2.500 7 0 10" fill="none" stroke="#ccc" /></svg></div>
        <div class="w-[26px] text-center text-[14px]">英</div>
        <div class="w-[66px] text-center font-['Noto_Sans',sans-serif] text-[12.500px] leading-[19px]">11:11<br />2016/10/31</div>
        <div class="w-[50px] flex justify-center"><svg class="w-[16px] h-[16px]" viewBox="0 0 16 16"><path d="M.5.500h15v12H10l-2 2.500-2-2.500H.5z" fill="none" stroke="#fff" /></svg></div>
      </div>
    </footer>

    <!-- forum watermark over the bottom right corner -->
    <div class="absolute left-[1709px] top-[1013px] w-[206px] h-[61px] bg-white/30 overflow-hidden">
      <svg class="absolute top-0 left-0 w-[206px] h-[61px]" viewBox="0 0 206 61">
        <ellipse cx="23" cy="30" rx="17" ry="27" transform="rotate(-35 23 30)" fill="none" stroke="#5a7f98" stroke-opacity=".7" stroke-width="3" />
        <ellipse cx="44" cy="40" rx="14" ry="20" transform="rotate(25 44 40)" fill="none" stroke="#a02020" stroke-opacity=".7" stroke-width="2.500" />
      </svg>
      <div class="absolute left-[70px] top-[2px] text-[30px] leading-[38px] font-bold tracking-[-.5px] bg-[linear-gradient(180deg,#86cfa6_0px,#86cfa6_25px,#0d4a2a_25px,#0d4a2a_38px)] bg-clip-text text-transparent">野火论坛</div>
      <div class="absolute left-[63px] top-[41px] font-['Liberation_Sans',sans-serif] text-[16px] leading-[18px] text-[#2c2c2c]/70 whitespace-nowrap">www.proewildfire.cn</div>
    </div>
  </body>
</html>
